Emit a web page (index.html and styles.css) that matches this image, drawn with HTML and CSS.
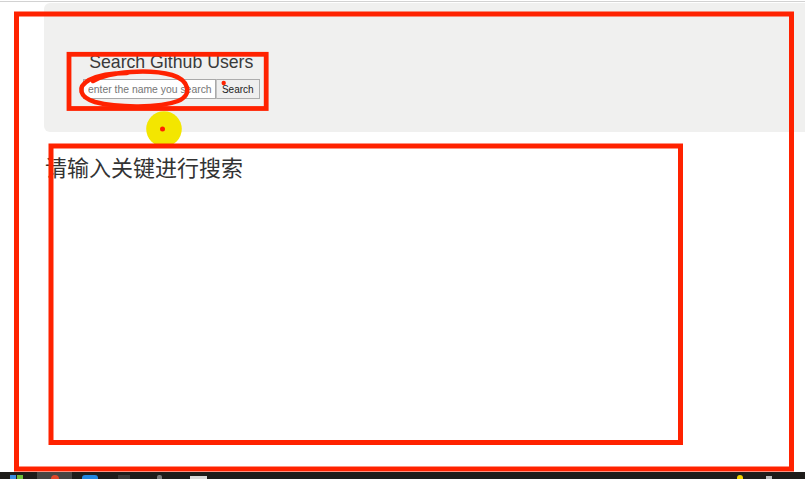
FILE: index.html
```html
<!DOCTYPE html>
<html lang="zh">
<head>
<meta charset="utf-8">
<title>Search Github Users</title>
<link rel="stylesheet" href="styles.css">
</head>
<body>
<div class="page">
  <div class="topline"></div>
  <header class="jumbotron">
    <div class="search">
      <h3 class="search-title">Search Github Users</h3>
      <div class="search-row">
        <input class="search-input" type="text" placeholder="enter the name you search">
        <button class="search-btn" type="button">Search</button>
      </div>
    </div>
  </header>
  <main class="results">
    <h2 class="hint">请输入关键进行搜索</h2>
  </main>
  <footer class="taskbar">
    <span class="tb-win"></span>
    <span class="tb-app"><span class="tb-app-icon"></span></span>
    <span class="tb-blue"></span>
    <span class="tb-dark"></span>
    <span class="tb-gray"></span>
    <span class="tb-light"></span>
    <span class="tb-yellow"></span>
    <span class="tb-more"></span>
  </footer>
</div>
<svg class="annotations" viewBox="0 0 805 479" width="805" height="479" xmlns="http://www.w3.org/2000/svg">
  <rect class="mark" x="16.5" y="14" width="775" height="455" stroke-width="5"/>
  <rect class="mark" x="69" y="54.3" width="197.2" height="54.2" stroke-width="4.8"/>
  <path class="mark" stroke-width="4.5" stroke-linecap="round" d="M 93 81 C 110 71, 150 69, 172 75 C 189 80, 193 95, 178 101 C 160 108, 118 108, 95 102 C 79 97, 77 87, 89 80 C 99 75, 114 73, 127 73"/>
  <circle class="dot" cx="223.7" cy="83" r="2.2"/>
  <circle class="cursor" cx="164" cy="129" r="17.8"/>
  <circle class="dot" cx="162.5" cy="129" r="2.5"/>
  <rect class="mark" x="51" y="146" width="629.5" height="296.5" stroke-width="5"/>
</svg>
</body>
</html>
```

FILE: styles.css
```css
html, body {
  margin: 0;
  height: 100%;
}

body {
  background: #ffffff;
  font-family: "Liberation Sans", Arial, sans-serif;
  color: #333333;
  overflow: hidden;
}

.page {
  display: flex;
  flex-direction: column;
  height: 100vh;
}

.topline {
  flex: none;
  height: 1px;
  margin-top: 1px;
  background: #d2d2d2;
}

.jumbotron {
  flex: none;
  margin: 1px 0 0 44px;
  padding: 49px 0 33px 39px;
  background: #f0f0ef;
  border-radius: 6px 0 0 6px;
}

.search {
  display: inline-flex;
  flex-direction: column;
  align-items: center;
  gap: 7px;
}

.search-title {
  margin: 0;
  font-size: 17.7px;
  line-height: 20px;
  font-weight: normal;
  color: #3a3a3a;
}

.search-row {
  display: flex;
}

.search-input {
  box-sizing: border-box;
  width: 133px;
  height: 20px;
  margin: 0;
  padding: 0 0 0 4px;
  border: 1px solid #a9a9a9;
  background: #ffffff;
  font: 10.4px "Liberation Sans", Arial, sans-serif;
  color: #333333;
  outline: none;
}

.search-input::placeholder {
  color: #757575;
}

.search-btn {
  box-sizing: border-box;
  width: 43.5px;
  height: 20px;
  margin: 0;
  padding: 0;
  border: 1px solid #adadad;
  border-left-color: #c4c4c4;
  background: #efefef;
  font: 10px "Liberation Sans", Arial, sans-serif;
  color: #222222;
}

.results {
  flex: 1;
  padding: 19px 0 0 45px;
}

.hint {
  margin: 0;
  font-family: "Noto Sans CJK SC", "Noto Sans", sans-serif;
  font-size: 22px;
  line-height: 30px;
  font-weight: normal;
  color: #333333;
}

.taskbar {
  flex: none;
  height: 7px;
  display: flex;
  align-items: flex-end;
  background: #1e1c1a;
}

.taskbar > span {
  flex: none;
  height: 4px;
}

.tb-win {
  width: 13px;
  margin-left: 10px;
  background: linear-gradient(90deg, #3a8de0 0 45%, #1e1c1a 45% 55%, #6fbf3a 55% 100%);
}

.tb-app {
  width: 35px;
  margin-left: 14px;
  display: flex;
  justify-content: center;
  align-items: flex-end;
  background: #474543;
}

.taskbar > .tb-app {
  height: 7px;
}

.tb-app-icon {
  width: 8px;
  height: 4px;
  border-radius: 4px 4px 0 0;
  background: #e2472a;
}

.tb-blue {
  width: 16px;
  margin-left: 10px;
  border-radius: 3px 3px 0 0;
  background: #1f86e0;
}

.tb-dark {
  width: 12px;
  margin-left: 20px;
  background: #3b3a38;
}

.tb-gray {
  width: 5px;
  margin-left: 27px;
  border-radius: 2px 2px 0 0;
  background: #7a7a7a;
}

.tb-light {
  width: 17px;
  margin-left: 28px;
  background: #d8d8d8;
}

.taskbar > .tb-light {
  height: 3px;
}

.tb-yellow {
  width: 6px;
  margin-left: auto;
  border-radius: 3px 3px 0 0;
  background: #f2d400;
}

.tb-more {
  width: 6px;
  margin-left: 23px;
  margin-right: 33px;
  background: #bdbdbd;
}

.taskbar > .tb-more {
  height: 3px;
}

.annotations {
  position: absolute;
  left: 0;
  top: 0;
  width: 805px;
  height: 479px;
  pointer-events: none;
}

.mark {
  fill: none;
  stroke: #ff2200;
}

.dot {
  fill: #ff2200;
}

.cursor {
  fill: #f3e600;
}
```
